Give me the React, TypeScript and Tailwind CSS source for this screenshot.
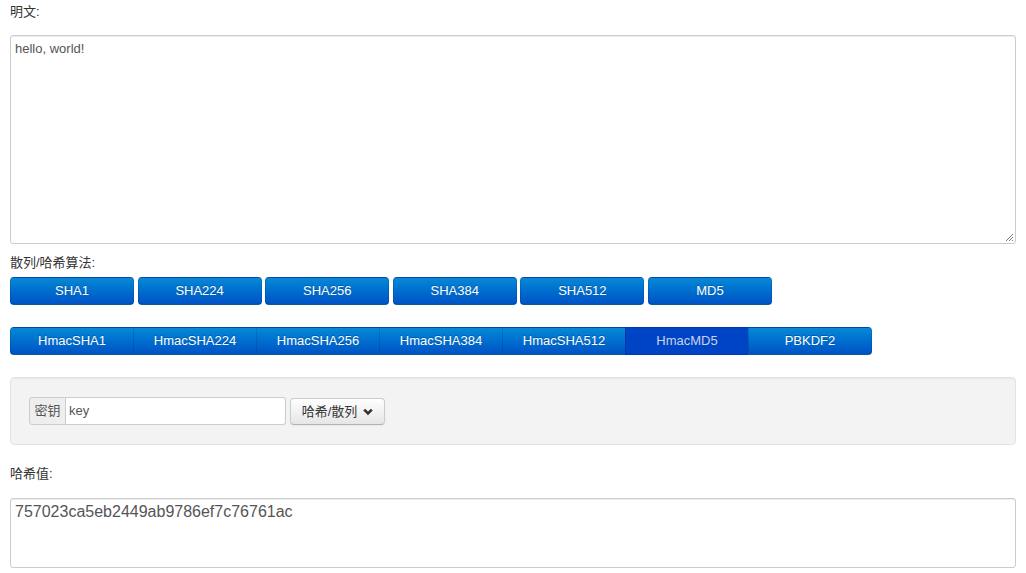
import React from 'react';

const font = { fontFamily: '"Liberation Sans", Arial, "Noto Sans CJK SC", sans-serif' };

const algos = ['SHA1', 'SHA224', 'SHA256', 'SHA384', 'SHA512', 'MD5'];
const hmacs = ['HmacSHA1', 'HmacSHA224', 'HmacSHA256', 'HmacSHA384', 'HmacSHA512', 'HmacMD5', 'PBKDF2'];

const primary =
  'bg-gradient-to-b from-[#0a88d6] to-[#0052c6] text-white [text-shadow:0_-1px_0_rgba(0,0,0,0.25)] border border-[rgba(0,0,0,0.12)] border-b-[rgba(0,0,0,0.3)]';

export default function App() {
  return (
    <div className="w-[1026px] h-[573px] bg-white text-[#333] px-[10px] overflow-hidden" style={font}>
      <div className="h-[35px] pt-[3px] text-[13px] leading-[18px]">明文:</div>
      <div className="relative h-[209px] border border-[#ccc] rounded-[3px] bg-white shadow-[inset_0_1px_1px_rgba(0,0,0,0.075)] px-[4px] py-[5px] text-[13px] leading-[16px] text-[#555]">
        hello, world!
        <svg className="absolute right-[1px] bottom-[1px]" width="10" height="10" viewBox="0 0 10 10">
          <path d="M9 2L2 9M9 5L5 9M9 8L8 9" stroke="#777" strokeWidth="1" />
        </svg>
      </div>

      <div className="h-[33px] pt-[10px] text-[13px] leading-[17px]">散列/哈希算法:</div>
      <div className="flex gap-[3.6px]">
        {algos.map((a) => (
          <div
            key={a}
            className={`${primary} w-[124px] h-[28px] rounded-[4px] flex items-center justify-center text-[13px]`}
          >
            {a}
          </div>
        ))}
      </div>

      <div className="flex mt-[22px] w-[862px] h-[28px]">
        {hmacs.map((h, i) => {
          const active = h === 'HmacMD5';
          return (
            <div
              key={h}
              className={`${
                active
                  ? 'bg-[#0044c6] text-[#c8d2e8] border border-[rgba(0,0,0,0.15)]'
                  : primary
              } flex-1 flex items-center justify-center text-[13px] ${i === 0 ? 'rounded-l-[4px]' : ''} ${
                i === hmacs.length - 1 ? 'rounded-r-[4px]' : ''
              } ${i > 0 ? '-ml-px' : ''}`}
            >
              {h}
            </div>
          );
        })}
      </div>

      <div className="mt-[22px] h-[68px] bg-[#f3f3f3] border border-[#e3e3e3] rounded-[4px] shadow-[inset_0_1px_1px_rgba(0,0,0,0.05)] px-[18px] pt-[19px]">
        <div className="flex items-start gap-[4px]">
          <div className="flex h-[28px] w-[257px]">
            <div className="w-[37px] bg-[#eee] border border-[#ccc] rounded-l-[3px] flex items-center justify-center text-[13px] text-[#555]">
              密钥
            </div>
            <div className="flex-1 bg-white border border-[#ccc] border-l-0 rounded-r-[3px] flex items-center px-[3px] text-[13px] text-[#555]">
              key
            </div>
          </div>
          <div className="h-[27px] mt-px w-[95px] flex items-center justify-center gap-[6px] rounded-[4px] border border-[#ccc] border-b-[#b3b3b3] bg-gradient-to-b from-white to-[#e6e6e6] text-[13px] text-[#333] shadow-[inset_0_1px_0_rgba(255,255,255,0.2),0_1px_2px_rgba(0,0,0,0.05)]">
            <span>哈希/散列</span>
            <svg width="10" height="8" viewBox="0 0 10 8">
              <path d="M1.2 1.6L5 5.4L8.8 1.6" fill="none" stroke="#333" strokeWidth="2.6" />
            </svg>
          </div>
        </div>
      </div>

      <div className="h-[53px] pt-[21px] text-[13px] leading-[16px]">哈希值:</div>
      <div className="h-[70px] border border-[#ccc] rounded-[3px] bg-white shadow-[inset_0_1px_1px_rgba(0,0,0,0.075)] px-[4px] pt-[3px] text-[16px] leading-[20px] text-[#555]">
        757023ca5eb2449ab9786ef7c76761ac
      </div>
    </div>
  );
}
